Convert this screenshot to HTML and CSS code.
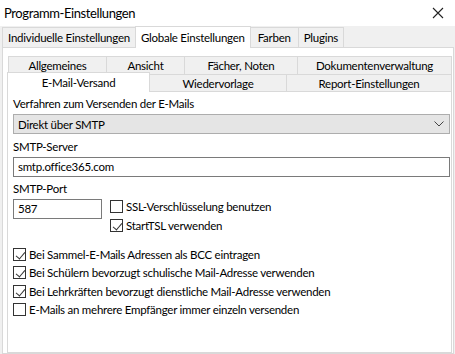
FILE: index.html
```html
<!DOCTYPE html>
<html lang="de">
<head>
  <meta charset="UTF-8">
  <title>Programm-Einstellungen</title>
  <link rel="stylesheet" href="styles.css">
</head>
<body>
  <div class="window">
    <div class="titlebar">
      <span class="title">Programm-Einstellungen</span>
      <svg class="close" width="12" height="12" viewBox="0 0 12 12">
        <path d="M1 1L11 11M11 1L1 11" stroke="#222" stroke-width="1.1" fill="none"/>
      </svg>
    </div>

    <div class="tabs-outer">
      <div class="tab">Individuelle Einstellungen</div>
      <div class="tab active">Globale Einstellungen</div>
      <div class="tab wide">Farben</div>
      <div class="tab">Plugins</div>
    </div>

    <div class="panel-outer">
      <div class="tabs-inner">
        <div class="tab-row back">
          <div class="itab w-allg">Allgemeines</div>
          <div class="itab w-ans">Ansicht</div>
          <div class="itab w-fae">Fächer, Noten</div>
          <div class="itab grow">Dokumentenverwaltung</div>
        </div>
        <div class="tab-row front">
          <div class="itab active w-mail">E-Mail-Versand</div>
          <div class="itab w-wied">Wiedervorlage</div>
          <div class="itab grow">Report-Einstellungen</div>
        </div>
      </div>

      <div class="panel-inner">
        <label class="lbl">Verfahren zum Versenden der E-Mails</label>
        <div class="select">
          <span>Direkt über SMTP</span>
          <svg width="10" height="6" viewBox="0 0 10 6">
            <path d="M0.5 0.5L5 5L9.5 0.5" stroke="#444" stroke-width="1" fill="none"/>
          </svg>
        </div>

        <label class="lbl">SMTP-Server</label>
        <div class="input">smtp.office365.com</div>

        <label class="lbl">SMTP-Port</label>
        <div class="port-row">
          <div class="input port">587</div>
          <div class="port-opts">
            <div class="check"><span class="box"></span>SSL-Verschlüsselung benutzen</div>
            <div class="check"><span class="box on"></span>StartTSL verwenden</div>
          </div>
        </div>

        <div class="checks">
          <div class="check"><span class="box on"></span>Bei Sammel-E-Mails Adressen als BCC eintragen</div>
          <div class="check"><span class="box on"></span>Bei Schülern bevorzugt schulische Mail-Adresse verwenden</div>
          <div class="check"><span class="box on"></span>Bei Lehrkräften bevorzugt dienstliche Mail-Adresse verwenden</div>
          <div class="check"><span class="box"></span>E-Mails an mehrere Empfänger immer einzeln versenden</div>
        </div>
      </div>
    </div>
  </div>
</body>
</html>
```

FILE: styles.css
```css
* {
  box-sizing: border-box;
}
body {
  margin: 0;
  font-family: Lato, "Liberation Sans", sans-serif;
  font-size: 11.5px;
  letter-spacing: -0.25px;
  color: #000;
  background: #f0f0f0;
}
.window {
  width: 455px;
  height: 354px;
  display: flex;
  flex-direction: column;
  overflow: hidden;
}
.titlebar {
  height: 26px;
  background: white;
  display: flex;
  align-items: center;
  justify-content: space-between;
  padding: 0 11px 0 4px;
  flex-shrink: 0;
}
.title {
  font-size: 13px;
  letter-spacing: -0.4px;
}
.tabs-outer {
  display: flex;
  align-items: flex-end;
  padding: 0 2px;
  height: 21px;
  flex-shrink: 0;
}
.tab {
  height: 20px;
  line-height: 19px;
  padding: 0 5px;
  border: 1px solid #d9d9d9;
  border-bottom: none;
  margin-right: -1px;
  background: #f0f0f0;
}
.tab.wide {
  padding: 0 7px;
}
.tab.active {
  height: 22px;
  line-height: 21px;
  background: white;
  position: relative;
  z-index: 1;
  margin-bottom: -1px;
}
.panel-outer {
  flex: 1;
  margin: 0 1px 0 2px;
  background: white;
  border: 1px solid #d9d9d9;
  padding: 8px 1px 0 4px;
  display: flex;
  flex-direction: column;
}
.tab-row {
  display: flex;
  height: 18px;
}
.tab-row.back {
  margin-left: 1px;
}
.itab {
  border: 1px solid #d9d9d9;
  border-bottom: none;
  margin-right: -1px;
  background: #f0f0f0;
  text-align: center;
  line-height: 17px;
  flex-shrink: 0;
}
.itab.grow {
  flex: 1;
  margin-right: 0;
}
.itab.active {
  background: white;
  height: 20px;
  margin-top: -2px;
  line-height: 19px;
  position: relative;
  z-index: 1;
}
.tab-row.front .itab:not(.active) {
  border-bottom: 1px solid #d9d9d9;
  height: 18px;
}
.w-allg { width: 99px; }
.w-ans { width: 79px; }
.w-fae { width: 114px; }
.w-mail { width: 143px; }
.w-wied { width: 138px; }
.panel-inner {
  flex: 1;
  border: 1px solid #d9d9d9;
  border-top: none;
  padding: 3px 1px 0 5px;
}
.lbl {
  display: block;
  height: 18px;
  line-height: 18px;
}
.select {
  height: 20px;
  margin-top: 1px;
  background: #e5e5e5;
  border: 1px solid #adadad;
  display: flex;
  align-items: center;
  justify-content: space-between;
  padding: 0 5px 0 4px;
  margin-bottom: 4px;
}
.input {
  height: 20px;
  line-height: 18px;
  border: 1px solid #7a7a7a;
  padding: 0 4px;
  margin-top: 1px;
  margin-bottom: 3px;
}
.port-row {
  display: flex;
  align-items: flex-start;
  gap: 8px;
}
.input.port {
  width: 89px;
  margin-bottom: 0;
}
.port-opts {
  margin-top: -1px;
}
.port-opts .check {
  height: 19px;
}
.check {
  display: flex;
  align-items: center;
  height: 18.5px;
  gap: 3px;
}
.box {
  width: 13px;
  height: 13px;
  border: 1px solid #333;
  background: white;
  position: relative;
  flex-shrink: 0;
}
.box.on::after {
  content: "";
  position: absolute;
  left: 4px;
  top: 1px;
  width: 4px;
  height: 8px;
  border: solid #333;
  border-width: 0 1px 1px 0;
  transform: rotate(40deg);
}
.checks {
  margin-top: 10px;
}
```
